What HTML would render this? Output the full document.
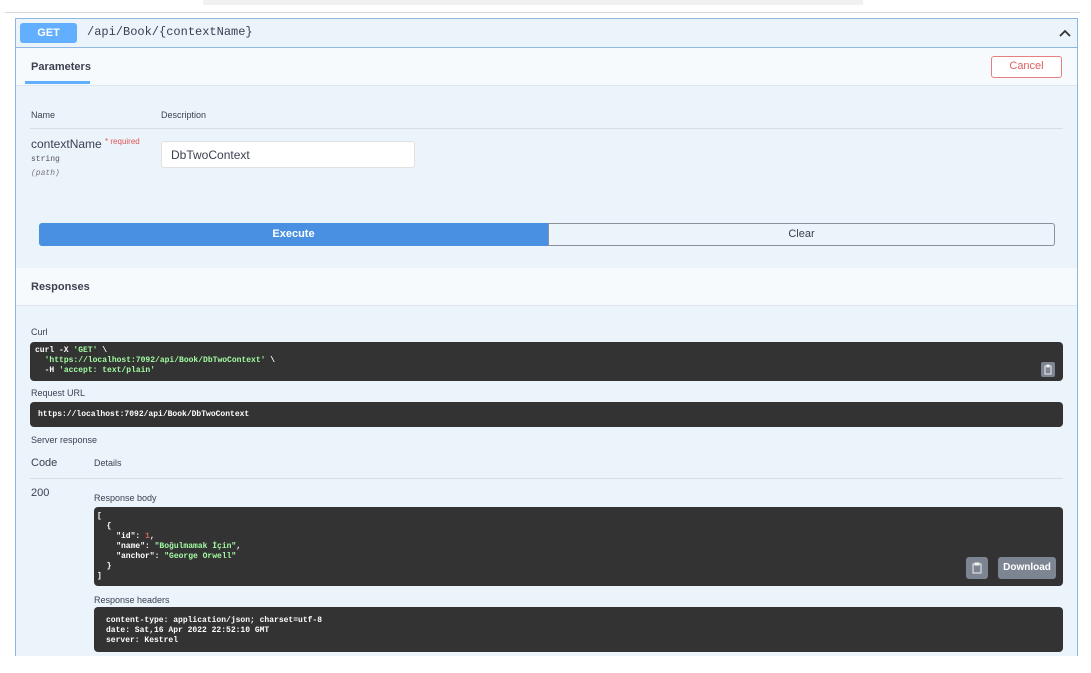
<!DOCTYPE html>
<html><head><meta charset="utf-8"><style>
*{box-sizing:border-box;margin:0;padding:0}
body{width:1091px;height:673px;background:#fff;font-family:"Liberation Sans",sans-serif;position:relative;overflow:hidden;color:#3b4151}
.a{position:absolute}
.mono{font-family:"Liberation Mono",monospace}
.dark{background:#333;border-radius:4px}
.code{font-family:"Liberation Mono",monospace;font-weight:bold;font-size:8px;color:#fff;line-height:10px;white-space:pre}
.g{color:#a2fca2}
.r{color:#d36363}
</style></head><body>
<div class="a" style="left:203px;top:0;width:660px;height:5px;background:#f1f1f1"></div>
<div class="a" style="left:5px;top:12px;width:1075px;height:1px;background:#d8d8d8"></div>
<div class="a" style="left:15px;top:18px;width:1063px;height:638px;background:#ebf3fb;border:1px solid #8fb8e0;border-bottom:none"></div>
<div class="a" style="left:16px;top:47px;width:1061px;height:1px;background:#8fb8e0"></div>
<div class="a" style="left:20px;top:23px;width:57px;height:20px;background:#61affe;border-radius:3px;color:#fff;font-size:11px;font-weight:bold;text-align:center;line-height:20px">GET</div>
<div class="a mono" style="left:87px;top:25px;font-size:12px;color:#3b4151">/api/Book/{contextName}</div>
<svg class="a" style="left:1058px;top:28px" width="14" height="10" viewBox="0 0 14 10"><path d="M2 8 L7 3 L12 8" stroke="#333" stroke-width="1.8" fill="none"/></svg>
<div class="a" style="left:16px;top:48px;width:1061px;height:38px;background:#f7fafd;border-bottom:1px solid #dfe6ed"></div>
<div class="a" style="left:31px;top:61px;font-size:11px;font-weight:bold;color:#3b4151">Parameters</div>
<div class="a" style="left:25px;top:81px;width:65px;height:3px;background:#61affe"></div>
<div class="a" style="left:991px;top:56px;width:71px;height:22px;border:1.5px solid #e58080;border-radius:3px;color:#e06060;font-size:11px;text-align:center;line-height:19px;background:#fff">Cancel</div>
<div class="a" style="left:31px;top:110px;font-size:9px">Name</div>
<div class="a" style="left:161px;top:110px;font-size:9px">Description</div>
<div class="a" style="left:30px;top:128px;width:1033px;height:1px;background:#d5dde5"></div>
<div class="a" style="left:31px;top:137px;font-size:12px">contextName <span style="color:#e05555;font-size:8px;vertical-align:top">* required</span></div>
<div class="a mono" style="left:31px;top:155px;font-size:8px;color:#555">string</div>
<div class="a mono" style="left:31px;top:169px;font-size:8px;font-style:italic;color:#777">(path)</div>
<div class="a" style="left:161px;top:141px;width:254px;height:27px;background:#fff;border:1px solid #e0e0e0;border-radius:3px;font-size:12px;padding:6px 9px">DbTwoContext</div>
<div class="a" style="left:39px;top:223px;width:509px;height:23px;background:#4990e2;border-radius:3px 0 0 3px;color:#fff;font-size:11px;font-weight:bold;text-align:center;line-height:23px">Execute</div>
<div class="a" style="left:548px;top:223px;width:507px;height:23px;border:1.5px solid #8a8f99;border-radius:0 3px 3px 0;font-size:11px;text-align:center;line-height:20px;color:#3b4151">Clear</div>
<div class="a" style="left:16px;top:268px;width:1061px;height:38px;background:#f7fafd;border-bottom:1px solid #dfe6ed"></div>
<div class="a" style="left:31px;top:281px;font-size:11px;font-weight:bold">Responses</div>
<div class="a" style="left:31px;top:327px;font-size:9px">Curl</div>
<div class="a dark" style="left:30px;top:342px;width:1033px;height:39px"></div>
<div class="a code" style="left:35px;top:346px">curl -X <span class="g">'GET'</span> \
  <span class="g">'https://localhost:7092/api/Book/DbTwoContext'</span> \
  -H <span class="g">'accept: text/plain'</span></div>
<div class="a" style="left:1041px;top:362px;width:14px;height:15px;background:#7d8492;border-radius:2px"><svg width="14" height="15" viewBox="0 0 14 15"><path d="M4 4h6v8H4z M6 3h2v2H6z" stroke="#eee" stroke-width="1" fill="none"/></svg></div>
<div class="a" style="left:31px;top:388px;font-size:9px">Request URL</div>
<div class="a dark" style="left:30px;top:402px;width:1033px;height:25px"></div>
<div class="a code" style="left:38px;top:410px">https://localhost:7092/api/Book/DbTwoContext</div>
<div class="a" style="left:31px;top:435px;font-size:9px">Server response</div>
<div class="a" style="left:31px;top:457px;font-size:11px">Code</div>
<div class="a" style="left:94px;top:458px;font-size:9px">Details</div>
<div class="a" style="left:30px;top:478px;width:1033px;height:1px;background:#d5dde5"></div>
<div class="a" style="left:31px;top:487px;font-size:11px">200</div>
<div class="a" style="left:94px;top:493px;font-size:9px">Response body</div>
<div class="a dark" style="left:94px;top:507px;width:969px;height:79px"></div>
<div class="a code" style="left:97px;top:512px">[
  {
    "id": <span class="r">1</span>,
    "name": <span class="g">"Boğulmamak İçin"</span>,
    "anchor": <span class="g">"George Orwell"</span>
  }
]</div>
<div class="a" style="left:966px;top:557px;width:22px;height:22px;background:#7d8492;border-radius:3px"><svg width="22" height="22" viewBox="0 0 22 22"><path d="M7 7h8v9H7z M9 6h4v2H9z" stroke="#eee" stroke-width="1" fill="none"/></svg></div>
<div class="a" style="left:998px;top:557px;width:58px;height:22px;background:#7d8492;border-radius:3px;color:#fff;font-size:10px;font-weight:bold;text-align:center;line-height:22px">Download</div>
<div class="a" style="left:94px;top:595px;font-size:9px">Response headers</div>
<div class="a dark" style="left:94px;top:607px;width:969px;height:45px"></div>
<div class="a code" style="left:106px;top:616px">content-type: application/json; charset=utf-8
date: Sat,16 Apr 2022 22:52:10 GMT
server: Kestrel</div>
</body></html>
